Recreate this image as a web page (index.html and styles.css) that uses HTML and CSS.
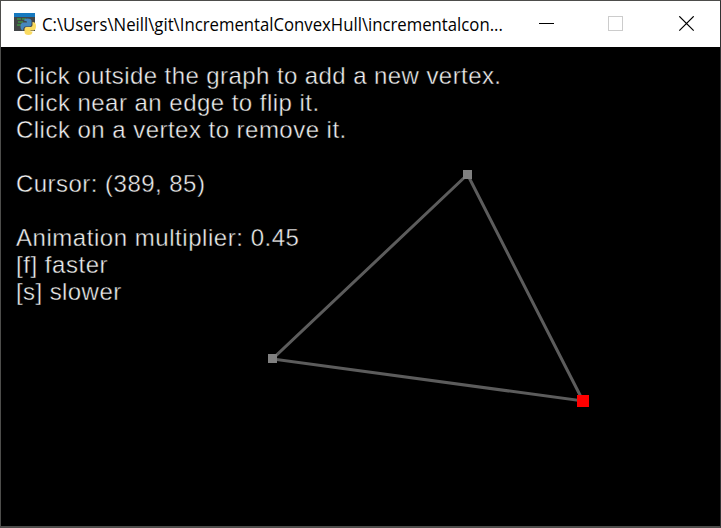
FILE: index.html
```html
<!DOCTYPE html>
<html lang="en">
<head>
<meta charset="utf-8">
<title>Incremental Convex Hull</title>
<link rel="stylesheet" href="styles.css">
</head>
<body>
<div class="window">
  <header class="titlebar">
    <svg class="app-icon" width="22" height="22" viewBox="0 0 22 22">
      <path fill="#424547" d="M0 0h21v18H0z"/>
      <path fill="#1679bf" d="M0 0h21v4H0z"/>
      <path stroke="#3f9444" stroke-width="1.4" d="M3 6h4M8 6h4M4 9h5M3 12h4"/>
      <path fill="#4587bd" d="M10 7.500q0-2 3.500-2t4 2v4q0 2-2 2h-4q-2 0-2.500 4q-2.500-.5-2.500-4t2.500-4h4v-1z"/>
      <path fill="#fadb62" d="M18.500 9q3.500 0 3.500 4t-2.500 4.500h-3v1h2q0 3.500-4 3.500t-4-3v-3q0-2 2-2h4q2 0 2-2z"/>
    </svg>
    <h1 class="title">C:\Users\Neill\git\IncrementalConvexHull\incrementalcon...</h1>
    <svg class="controls" width="156" height="16" viewBox="0 0 156 16" fill="none" shape-rendering="crispEdges">
      <path stroke="#000" d="M0 7.500h15"/>
      <path stroke="#ccc" d="M69.500 .5h14v14h-14z"/>
      <path stroke="#000" stroke-width="1.200" shape-rendering="auto" d="M140.300 .3l14.400 14.400M154.700 .3l-14.400 14.400"/>
    </svg>
  </header>
  <main class="canvas">
    <div class="info">
      <p>Click outside the graph to add a new vertex.</p>
      <p class="wide">Click near an edge to flip it.</p>
      <p class="wide">Click on a vertex to remove it.</p>
      <p class="gap wide">Cursor: (389, 85)</p>
      <p class="gap wider">Animation multiplier: 0.45</p>
      <p class="wider">[f] faster</p>
      <p>[s] slower</p>
    </div>
    <svg class="graph" width="719" height="479" viewBox="1 47 719 479">
      <path fill="none" stroke="#5c5c5c" stroke-width="3" d="M467.500 174.500L272.500 359L583 401z"/>
      <path fill="#808080" d="M463 170h9v9h-9zM268 354h9v9h-9z"/>
      <path fill="#f00" d="M577 395h12v12h-12z"/>
    </svg>
  </main>
</div>
</body>
</html>
```
FILE: styles.css
```css
* { box-sizing: border-box; }

body { margin: 0; }

.window {
  width: 721px;
  height: 528px;
  display: flex;
  flex-direction: column;
  border: 1px solid #4d4d4b;
  border-bottom-width: 2px;
  border-right-color: #333;
  background: #000;
}

.titlebar {
  height: 46px;
  flex: none;
  display: flex;
  align-items: center;
  padding: 0 25px 0 13px;
  background: #fff;
}

.app-icon { flex: none; }

.title {
  flex: 1;
  min-width: 0;
  margin: 0 0 0 6px;
  font: 400 18.500px/28px "Open Sans", "Noto Sans", sans-serif;
  color: #000;
  white-space: nowrap;
  transform: scaleX(.904);
  transform-origin: left;
}

.controls { flex: none; }

.canvas {
  position: relative;
  flex: 1;
  background: #000;
}

.info {
  padding: 15px 0 0 15px;
  font: 24px/27px "Liberation Sans", Arial, sans-serif;
  letter-spacing: .42px;
  color: #eee;
  -webkit-text-stroke: .4px #000;
  white-space: nowrap;
}

.info p {
  width: max-content;
  margin: 0;
}

.info .gap { margin-top: 27px; }

.info .wide { letter-spacing: .47px; }

.info .wider { letter-spacing: .54px; }

.graph {
  position: absolute;
  inset: 0;
}
```
